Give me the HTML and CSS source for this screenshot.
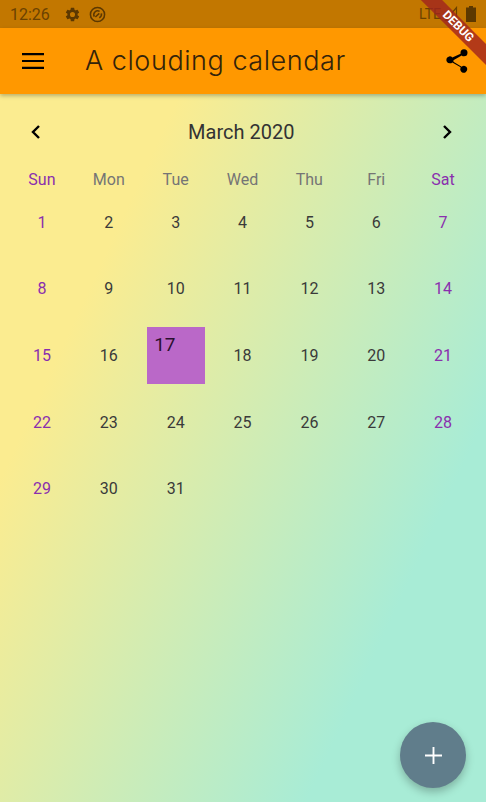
FILE: index.html
```html
<!DOCTYPE html>
<html lang="en">
  <head>
    <meta charset="UTF-8" />
    <title>A clouding calendar</title>
    <link rel="stylesheet" href="styles.css">
  </head>
  <body>
    <div class="screen">
      <div class="status-bar">
        <span class="clock">12:26</span>
        <svg class="status-icon" viewBox="0 0 24 24"><path d="M19.14 12.94c.04-.3.06-.61.06-.94s-.02-.64-.07-.94l2.03-1.58a.49.49 0 0 0 .12-.61l-1.92-3.32a.49.49 0 0 0-.59-.22l-2.39.96a7 7 0 0 0-1.62-.94l-.36-2.54a.48.48 0 0 0-.48-.41h-3.84a.48.48 0 0 0-.47.41l-.36 2.54c-.59.24-1.13.57-1.62.94l-2.39-.96a.48.48 0 0 0-.59.22L2.74 8.87a.48.48 0 0 0 .12.61l2.03 1.58c-.05.3-.09.63-.09.94s.02.64.07.94l-2.03 1.58a.49.49 0 0 0-.12.61l1.92 3.32c.12.22.37.29.59.22l2.39-.96c.5.38 1.03.7 1.62.94l.36 2.54c.05.24.24.41.48.41h3.84c.24 0 .44-.17.47-.41l.36-2.54c.59-.24 1.13-.56 1.62-.94l2.39.96c.22.08.47 0 .59-.22l1.92-3.32a.48.48 0 0 0-.12-.61l-2.01-1.58zM12 15.6a3.6 3.6 0 1 1 0-7.2 3.6 3.6 0 0 1 0 7.2z"/></svg>
        <svg class="status-icon sync" viewBox="0 0 24 24"><circle cx="12" cy="12" r="10"/><path d="M7.500 15a5.500 5.500 0 0 1 7.500-7.500M17.500 10.500a5.500 5.500 0 0 1-3 6"/><path d="M9 15.500l5.500-5"/></svg>
        <span class="status-right">
          <span class="lte">LTE</span>
          <svg class="signal" viewBox="0 0 14 16"><path d="M12.500 1.500v13h-11z"/></svg>
          <svg class="battery" viewBox="0 0 10 16"><path d="M3 0h4v1.500h3V16H0V1.500h3z"/></svg>
        </span>
      </div>

      <header class="app-bar">
        <svg class="menu-icon" viewBox="0 0 22 16"><path d="M0 0h22v2.200H0zM0 6.900h22v2.200H0zM0 13.800h22V16H0z"/></svg>
        <h1 class="title">A clouding calendar</h1>
        <svg class="share-icon" viewBox="0 0 24 24"><path d="M18 16.100c-.8 0-1.500.3-2 .8l-7.100-4.200c.1-.2.1-.5.1-.7s0-.5-.1-.7L16 7.200c.5.5 1.200.8 2 .8a3 3 0 1 0-3-3c0 .2 0 .5.100.7L8 8.900A3 3 0 1 0 6 14c.8 0 1.500-.3 2-.8l7.100 4.200c-.1.200-.1.400-.1.600a3 3 0 1 0 3-1.900z"/></svg>
      </header>

      <main class="calendar">
        <div class="month-row">
          <svg class="chevron" viewBox="0 0 12 16"><path d="M9 2L3 8l6 6"/></svg>
          <span class="month">March 2020</span>
          <svg class="chevron" viewBox="0 0 12 16"><path d="M3 2l6 6-6 6"/></svg>
        </div>

        <div class="weekdays">
          <span class="weekend">Sun</span>
          <span>Mon</span>
          <span>Tue</span>
          <span>Wed</span>
          <span>Thu</span>
          <span>Fri</span>
          <span class="weekend">Sat</span>
        </div>

        <div class="days">
          <div class="day weekend">1</div>
          <div class="day">2</div>
          <div class="day">3</div>
          <div class="day">4</div>
          <div class="day">5</div>
          <div class="day">6</div>
          <div class="day weekend">7</div>
          <div class="day weekend">8</div>
          <div class="day">9</div>
          <div class="day">10</div>
          <div class="day">11</div>
          <div class="day">12</div>
          <div class="day">13</div>
          <div class="day weekend">14</div>
          <div class="day weekend">15</div>
          <div class="day">16</div>
          <div class="day selected"><span>17</span></div>
          <div class="day">18</div>
          <div class="day">19</div>
          <div class="day">20</div>
          <div class="day weekend">21</div>
          <div class="day weekend">22</div>
          <div class="day">23</div>
          <div class="day">24</div>
          <div class="day">25</div>
          <div class="day">26</div>
          <div class="day">27</div>
          <div class="day weekend">28</div>
          <div class="day weekend">29</div>
          <div class="day">30</div>
          <div class="day">31</div>
        </div>
      </main>

      <button class="fab">
        <svg viewBox="0 0 18 18"><path d="M8 0h2v8h8v2h-8v8H8v-8H0V8h8z"/></svg>
      </button>

      <div class="debug-banner">DEBUG</div>
    </div>
  </body>
</html>
```

FILE: styles.css
```css
* {
  box-sizing: border-box;
}
body {
  margin: 0;
  font-family: Roboto, "Liberation Sans", sans-serif;
}
.screen {
  position: relative;
  width: 486px;
  height: 802px;
  display: flex;
  flex-direction: column;
  overflow: hidden;
}
.status-bar {
  height: 28px;
  background: #c27700;
  display: flex;
  align-items: center;
  padding: 0 10px;
  color: #6b4200;
}
.clock {
  font-size: 16px;
  margin-right: 14px;
}
.status-icon {
  width: 17px;
  height: 17px;
  fill: #5c3800;
  margin-right: 8px;
}
.status-icon.sync {
  fill: none;
  stroke: #5c3800;
  stroke-width: 2.200;
}
.status-right {
  margin-left: auto;
  display: flex;
  align-items: center;
  gap: 1px;
}
.lte {
  font-size: 14px;
  margin-right: 2px;
}
.signal {
  width: 14px;
  height: 16px;
  fill: none;
  stroke: #6b4200;
  stroke-width: 1.200;
}
.battery {
  width: 10px;
  height: 16px;
  fill: #5c3800;
  margin-left: 7px;
}
.app-bar {
  position: relative;
  z-index: 1;
  height: 66px;
  background: #ff9800;
  display: flex;
  align-items: center;
  padding: 0 15px 0 22px;
  box-shadow: 0 2px 4px rgba(0, 0, 0, 0.25);
}
.menu-icon {
  width: 22px;
  height: 16px;
  margin-bottom: 1px;
}
.title {
  margin: -2px 0 0 41px;
  font-family: Inter, sans-serif;
  font-size: 27px;
  font-weight: 300;
  letter-spacing: 0.550px;
  color: #33230a;
  flex: 1;
}
.share-icon {
  width: 28px;
  height: 28px;
}
.calendar {
  flex: 1;
  padding: 0 9.500px 0 8.500px;
  background: linear-gradient(115deg, #fbec90 22%, #a8ecd6 78%);
}
.month-row {
  display: flex;
  align-items: center;
  justify-content: space-between;
  height: 76px;
  padding: 0 24px 0 21.500px;
}
.chevron {
  width: 12px;
  height: 16px;
  fill: none;
  stroke: #000;
  stroke-width: 2.400;
}
.month {
  font-size: 20px;
  color: #333;
  margin-top: -1px;
}
.weekdays {
  display: grid;
  grid-template-columns: repeat(7, 1fr);
  height: 19px;
  text-align: center;
  font-size: 16px;
  color: #757575;
}
.weekdays span {
  line-height: 19px;
}
.days {
  display: grid;
  grid-template-columns: repeat(7, 1fr);
  grid-auto-rows: 66.600px;
}
.day {
  display: flex;
  align-items: center;
  justify-content: center;
  font-size: 16px;
  color: #3a3a3a;
}
.weekend {
  color: #8a2fae;
}
.day.selected {
  justify-content: flex-start;
  align-items: flex-start;
  width: 58px;
  height: 57px;
  margin: 5px 4px 4px 5px;
  padding: 6px 7px;
  background: #ba68c8;
  font-size: 19px;
  color: #2a1030;
}
.fab {
  position: absolute;
  right: 20px;
  bottom: 14px;
  width: 66px;
  height: 66px;
  border: none;
  border-radius: 50%;
  background: #607d8b;
  box-shadow: 0 4px 8px rgba(0, 0, 0, 0.25);
  display: flex;
  align-items: center;
  justify-content: center;
  padding: 0;
}
.fab svg {
  width: 17px;
  height: 17px;
  fill: #fff;
}
.debug-banner {
  position: absolute;
  top: 19px;
  right: -47px;
  width: 150px;
  height: 15px;
  transform: rotate(45deg);
  background: rgba(160, 35, 30, 0.8);
  color: #fff;
  font-size: 12px;
  font-weight: 700;
  line-height: 15px;
  text-align: center;
  z-index: 2;
}
```
